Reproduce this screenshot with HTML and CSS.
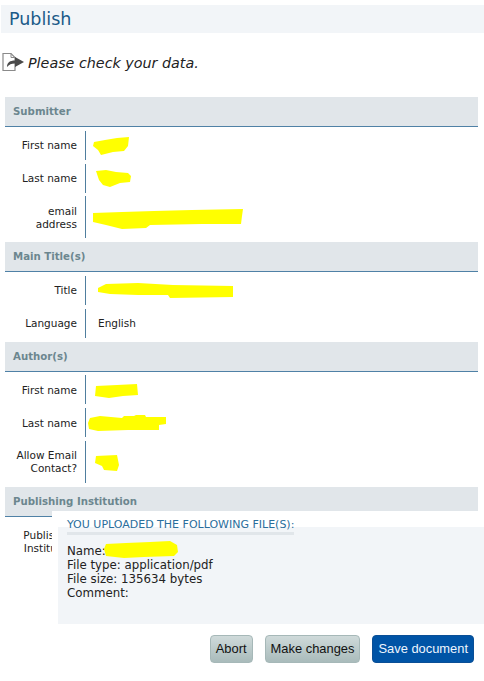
FILE: index.html
```html
<!DOCTYPE html>
<html lang="en">
<head>
<meta charset="utf-8">
<title>Publish</title>
<link rel="stylesheet" href="styles.css">
</head>
<body>
<h1 class="page-title">Publish</h1>
<p class="notice">
  <svg class="notice-icon" width="24" height="20" viewBox="0 0 24 20" aria-hidden="true">
    <path d="M2 1.5H10L14 5.5V18.5H2Z" fill="#fff" stroke="#8a8a8a" stroke-width="1.2"/>
    <path d="M10 1.5V5.5H14" fill="none" stroke="#8a8a8a" stroke-width="1"/>
    <path d="M6 15C6 10.5 9 8.5 14 8.5V5L23 10L14 15V11.5C10.5 11.5 8 12.5 6 15Z" fill="#4a4a4a"/>
  </svg>
  <em>Please check your data.</em>
</p>

<section class="sections">
  <h2 class="section-head">Submitter</h2>
  <div class="row"><div class="label">First name</div><div class="value">
    <svg class="blob b-a" width="36" height="18" viewBox="0 0 36 18"><path d="M1 5L12 3L24 1L36 0L35 9L31 14L20 15L8 18L5 13L0 9Z" fill="#ff0"/></svg></div></div>
  <div class="row"><div class="label">Last name</div><div class="value">
    <svg class="blob b-b" width="35" height="17" viewBox="0 0 35 17"><path d="M0 1L10 0L20 2L32 3L35 6L34 12L24 13L14 17L7 15L3 10Z" fill="#ff0"/></svg></div></div>
  <div class="row row-tall"><div class="label">email<br>address</div><div class="value">
    <svg class="blob b-c" width="151" height="20" viewBox="0 0 151 20"><path d="M1 4L30 3L62 2L100 1L151 0L150 7L149 15L110 15L58 16L54 19L30 20L14 16L1 13Z" fill="#ff0"/></svg></div></div>

  <h2 class="section-head">Main Title(s)</h2>
  <div class="row"><div class="label">Title</div><div class="value">
    <svg class="blob b-d" width="135" height="15" viewBox="0 0 135 15"><path d="M0 5L8 1L40 0L75 2L135 3L135 14L72 15L70 12L40 12L12 11L0 9Z" fill="#ff0"/></svg></div></div>
  <div class="row"><div class="label">Language</div><div class="value"><span class="value-text">English</span></div></div>

  <h2 class="section-head">Author(s)</h2>
  <div class="row"><div class="label">First name</div><div class="value">
    <svg class="blob b-e" width="43" height="14" viewBox="0 0 43 14"><path d="M1 2L22 1L42 0L43 11L28 12L14 14L0 12Z" fill="#ff0"/></svg></div></div>
  <div class="row"><div class="label">Last name</div><div class="value">
    <svg class="blob b-f" width="78" height="16" viewBox="0 0 78 16"><path d="M2 3L12 1L34 3L36 1L46 1L48 0L57 0L58 2L78 2L78 9L71 10L71 15L40 15L10 16L1 14L0 8Z" fill="#ff0"/></svg></div></div>
  <div class="row row-tall"><div class="label">Allow Email<br>Contact?</div><div class="value">
    <svg class="blob b-g" width="24" height="17" viewBox="0 0 24 17"><path d="M1 2L22 1L23 6L24 11L22 17L9 16L7 12L0 9Z" fill="#ff0"/></svg></div></div>

  <h2 class="section-head">Publishing Institution</h2>
  <div class="row row-tall"><div class="label">Publishing<br>Institution</div><div class="value"></div></div>
</section>

<aside class="upload">
  <div class="upload-body">
    <h3 class="upload-title">YOU UPLOADED THE FOLLOWING FILE(S):</h3>
    <div class="upload-line">Name:<svg class="blob b-h" width="74" height="17" viewBox="0 0 74 17"><path d="M2 3L22 2L46 1L66 0L73 4L74 11L70 15L40 16L20 17L2 15L0 8Z" fill="#ff0"/></svg></div>
    <div class="upload-line">File type: application/pdf</div>
    <div class="upload-line">File size: 135634 bytes</div>
    <div class="upload-line">Comment:</div>
  </div>
</aside>

<div class="actions">
  <button class="btn" type="button">Abort</button>
  <button class="btn" type="button">Make changes</button>
  <button class="btn btn-primary" type="button">Save document</button>
</div>
</body>
</html>
```
FILE: styles.css
```css
* { box-sizing: border-box; }
html, body { margin: 0; padding: 0; }
body {
  background: #fff;
  color: #222;
  font-family: "DejaVu Sans", Verdana, sans-serif;
  font-size: 10.5px;
  overflow: hidden;
  height: 681px;
}
.page-title {
  margin: 5px 0 0 1px;
  height: 28px;
  padding-left: 8px;
  background: #f2f5f8;
  color: #1b5a88;
  font-size: 17.5px;
  font-weight: normal;
  line-height: 29px;
}
.notice {
  display: flex;
  align-items: center;
  gap: 3px;
  margin: 19px 0 0 1px;
  height: 20px;
  padding-top: 1px;
  font-size: 14.3px;
  color: #222;
}
.notice-icon { flex: none; margin-top: -1px; }
.sections {
  display: flex;
  flex-direction: column;
  gap: 3.8px;
  margin: 25px 6px 0 5px;
}
.section-head {
  margin: 0;
  height: 30px;
  padding-left: 8px;
  background: #e1e6ea;
  border-bottom: 1.5px solid #4f81a6;
  color: #6c868f;
  font-size: 10.2px;
  font-weight: bold;
  line-height: 30px;
}
.row {
  display: grid;
  grid-template-columns: 81px 1fr;
  height: 29px;
}
.row-tall { height: 42px; }
.label {
  display: flex;
  align-items: center;
  justify-content: flex-end;
  padding: 1px 8px 0 0;
  border-right: 1px solid #4f7e9e;
  text-align: right;
  line-height: 13px;
}
.value {
  display: flex;
  align-items: center;
}
.value-text { margin-left: 12px; }
.blob { flex: none; display: block; }
.b-a { margin-left: 7px; margin-top: 2px; }
.b-b { margin-left: 10px; margin-top: 1px; }
.b-c { margin-left: 6px; margin-top: 3px; }
.b-d { margin-left: 12px; margin-top: 1px; }
.b-e { margin-left: 9px; margin-top: 2px; }
.b-f { margin-left: 2px; margin-top: 1px; }
.b-g { margin-left: 9px; margin-top: 2px; }
.b-h { position: absolute; top: -3px; left: 37px; }
.upload {
  position: relative;
  margin: -52px 0 0 52px;
  padding: 16px 0 0 6px;
  background: #fff;
}
.upload-body {
  height: 97px;
  padding: 0 0 0 9px;
  background: #f2f5f8;
  font-size: 11.8px;
  line-height: 14px;
}
.upload-title {
  position: relative;
  top: -10px;
  width: 227px;
  margin: 0 0 -1px;
  border-bottom: 3px solid #e1e6ea;
  color: #2a6e9c;
  font-size: 11px;
  font-weight: normal;
  line-height: 15px;
  white-space: nowrap;
}
.upload-line { position: relative; }
.actions {
  display: flex;
  justify-content: flex-end;
  gap: 12px;
  margin-top: 11px;
  padding-right: 10px;
}
.btn {
  height: 28px;
  padding: 0 5px;
  border: 1px solid #a6b8b8;
  border-radius: 4px;
  background: linear-gradient(#cfdada, #a9bbbb);
  color: #111;
  font-family: "Liberation Sans", Arial, sans-serif;
  font-size: 12.9px;
}
.btn-primary {
  background: #0054a6;
  border-color: #0a4f96;
  color: #eef6ff;
}
```
